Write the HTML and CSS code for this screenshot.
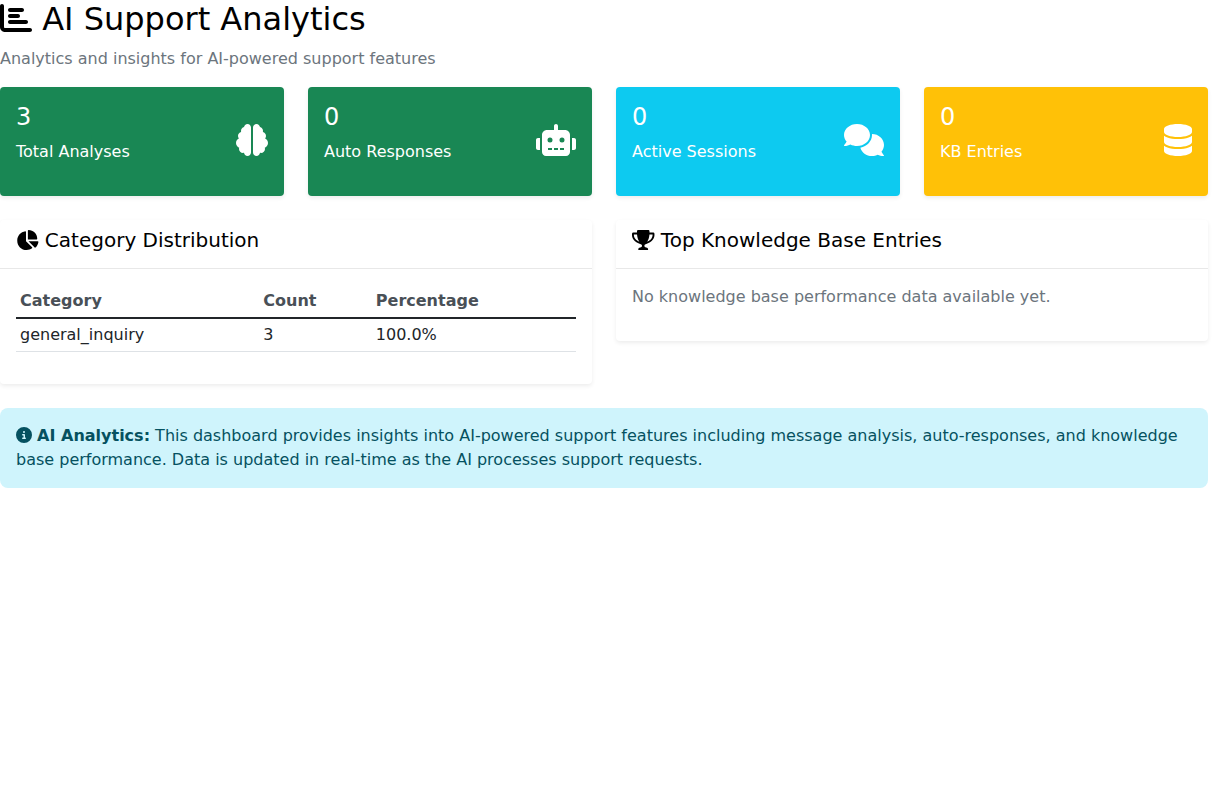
FILE: index.html
```html
<!DOCTYPE html>
<html lang="en">
<head>
<meta charset="utf-8">
<title>AI Support Analytics</title>
<link rel="stylesheet" href="styles.css">
</head>
<body>
<main class="page">
  <header class="page-header">
    <h1><svg class="icon" viewBox="0 0 512 512"><path d="M32 32c17.7 0 32 14.3 32 32V400c0 8.800 7.200 16 16 16H480c17.700 0 32 14.300 32 32s-14.300 32-32 32H80c-44.200 0-80-35.800-80-80V64C0 46.300 14.300 32 32 32zm96 96c0-17.700 14.300-32 32-32l192 0c17.700 0 32 14.300 32 32s-14.300 32-32 32l-192 0c-17.700 0-32-14.300-32-32zm32 64H288c17.700 0 32 14.300 32 32s-14.300 32-32 32H160c-17.700 0-32-14.300-32-32s14.300-32 32-32zm0 96H416c17.700 0 32 14.300 32 32s-14.300 32-32 32H160c-17.700 0-32-14.300-32-32s14.300-32 32-32z"/></svg> AI Support Analytics</h1>
    <p class="muted">Analytics and insights for AI-powered support features</p>
  </header>

  <section class="stats">
    <div class="card stat green">
      <div><h4>3</h4><p>Total Analyses</p></div>
      <svg class="icon" viewBox="0 0 512 512"><path d="M184 0c30.9 0 56 25.1 56 56V456c0 30.9-25.1 56-56 56c-28.9 0-52.7-21.9-55.7-50.1c-5.2 1.4-10.7 2.1-16.3 2.1c-35.3 0-64-28.7-64-64c0-7.4 1.3-14.6 3.6-21.2C21.4 367.4 0 338.2 0 304c0-31.9 18.7-59.5 45.8-72.3C37.1 220.8 32 207 32 192c0-30.7 21.6-56.3 50.4-62.6C80.8 123.9 80 118 80 112c0-29.9 20.6-55.1 48.3-62.1C131.3 21.9 155.1 0 184 0zM328 0c28.9 0 52.6 21.9 55.7 49.9c27.8 7 48.3 32.1 48.3 62.1c0 6-.8 11.9-2.4 17.4c28.8 6.2 50.4 31.9 50.4 62.6c0 15-5.1 28.8-13.8 39.7C493.3 244.5 512 272.1 512 304c0 34.2-21.4 63.4-51.6 74.8c2.3 6.6 3.6 13.8 3.6 21.2c0 35.3-28.7 64-64 64c-5.6 0-11.1-.7-16.3-2.1c-3 28.2-26.8 50.1-55.700 50.1c-30.9 0-56-25.1-56-56V56c0-30.9 25.1-56 56-56z"/></svg>
    </div>
    <div class="card stat green">
      <div><h4>0</h4><p>Auto Responses</p></div>
      <svg class="icon w-640" viewBox="0 0 640 512"><path fill-rule="evenodd" d="M32 224h32v192H32c-17.7 0-32-14.300-32-32V256c0-17.700 14.300-32 32-32zM608 224h-32v192h32c17.700 0 32-14.300 32-32V256c0-17.700-14.300-32-32-32zM464 96H352V32c0-17.700-14.300-32-32-32s-32 14.300-32 32v64H176c-44.200 0-80 35.800-80 80v272c0 35.300 28.700 64 64 64h320c35.300 0 64-28.700 64-64V176c0-44.200-35.800-80-80-80zM192 384h64v32h-64zM288 384h64v32h-64zM384 384h64v32h-64zM264 256a40 40 0 1 0-80 0 40 40 0 1 0 80 0zM456 256a40 40 0 1 0-80 0 40 40 0 1 0 80 0z"/></svg>
    </div>
    <div class="card stat cyan">
      <div><h4>0</h4><p>Active Sessions</p></div>
      <svg class="icon w-640" viewBox="0 0 640 512"><path d="M416 176C416 78.8 322.9 0 208 0S0 78.8 0 176c0 39.57 15.62 75.96 41.67 105.4c-16.39 32.76-39.23 57.32-39.59 57.68c-2.1 2.205-2.67 5.475-1.441 8.354C1.9 350.3 4.602 352 7.66 352c38.35 0 70.76-11.12 95.74-24.04C134.2 343.1 169.8 352 208 352C322.9 352 416 273.2 416 176zM599.6 443.7C624.8 413.9 640 376.6 640 336C640 238.8 554 160 448 160c-.3145 0-.6191 .041-.9336 .043C447.5 165.3 448 170.6 448 176c0 98.62-79.68 181.2-186.1 202.5C282.7 455.1 357.1 512 448 512c33.69 0 65.32-8.008 92.85-21.98C565.2 502 596.1 512 632.3 512c3.059 0 5.76-1.725 7.02-4.605c1.229-2.879 .6582-6.148-1.441-8.354C637.6 498.7 615.9 475.3 599.6 443.7z"/></svg>
    </div>
    <div class="card stat amber">
      <div><h4>0</h4><p>KB Entries</p></div>
      <svg class="icon w-448" viewBox="0 0 448 512"><path d="M448 80v48c0 44.2-100.3 80-224 80S0 172.2 0 128V80C0 35.8 100.3 0 224 0S448 35.8 448 80zM393.2 214.7c20.8-7.4 39.9-16.9 54.8-28.6V288c0 44.2-100.3 80-224 80S0 332.2 0 288V186.1c14.9 11.8 34 21.2 54.8 28.6C99.7 230.7 159.5 240 224 240s124.3-9.3 169.2-25.3zM0 346.1c14.9 11.8 34 21.2 54.8 28.6C99.7 390.7 159.5 400 224 400s124.3-9.3 169.2-25.3c20.8-7.4 39.9-16.9 54.8-28.6V432c0 44.2-100.3 80-224 80S0 476.2 0 432V346.1z"/></svg>
    </div>
  </section>

  <section class="panels">
    <div class="card">
      <div class="card-header"><h5><svg class="icon w-576" viewBox="0 0 576 512"><path d="M304 240V16.6c0-9 7-16.6 16-16.6C443.7 0 544 100.3 544 224c0 9-7.6 16-16.6 16H304zM32 272C32 150.7 122.1 50.3 239 34.3c9.2-1.3 17 6.1 17 15.4V288L412.5 444.5c6.7 6.7 6.2 17.7-1.5 23.1C371.8 495.6 323.8 512 272 512C139.5 512 32 404.6 32 272zm526.4 16c9.3 0 16.6 7.8 15.4 17c-7.7 55.9-34.6 105.6-73.9 142.3c-6 5.6-15.4 5.2-21.2-.7L320 288H558.4z"/></svg> Category Distribution</h5></div>
      <div class="card-body">
        <table>
          <thead><tr><th>Category</th><th>Count</th><th>Percentage</th></tr></thead>
          <tbody><tr><td>general_inquiry</td><td>3</td><td>100.0%</td></tr></tbody>
        </table>
      </div>
    </div>
    <div class="card">
      <div class="card-header"><h5><svg class="icon w-576" viewBox="0 0 576 512"><path d="M572.1 82.38C569.5 71.59 559.8 64 548.7 64h-100.8c.2422-12.45 .1078-23.7-.1559-33.02C447.3 13.63 433.2 0 415.8 0H160.2C142.8 0 128.7 13.63 128.2 30.98C127.1 40.3 127.8 51.55 128.1 64H27.26C16.16 64 6.537 71.59 3.912 82.38C3.1 85.78-15.71 167.2 37.07 245.9c37.44 55.82 100.6 95.03 187.5 117.4c18.7 4.805 31.41 22.06 31.41 41.37C256 428.5 236.5 448 212.6 448H208c-26.52 0-47.99 21.5-47.99 48c0 8.836 7.163 16 15.1 16h223.1c8.836 0 15.1-7.164 15.1-16c0-26.5-21.48-48-47.99-48h-4.644c-23.86 0-43.36-19.5-43.36-43.35c0-19.31 12.71-36.57 31.41-41.37c86.96-22.34 150.1-61.55 187.5-117.4C591.7 167.2 572.9 85.78 572.1 82.38zM77.41 219.8C49.47 178.6 47.01 135.7 48.38 112h80.39c5.359 59.62 20.35 131.1 57.67 189.1C137.4 281.6 100.9 254.4 77.41 219.8zM498.6 219.8c-23.44 34.6-59.94 61.75-109 81.22C426.9 243.1 441.9 171.6 447.2 112h80.39C528.1 135.7 526.5 178.7 498.6 219.8z"/></svg> Top Knowledge Base Entries</h5></div>
      <div class="card-body"><p class="muted">No knowledge base performance data available yet.</p></div>
    </div>
  </section>

  <div class="alert"><svg class="icon" viewBox="0 0 512 512"><path d="M256 512A256 256 0 1 0 256 0a256 256 0 1 0 0 512zM216 336h24V272H216c-13.3 0-24-10.7-24-24s10.7-24 24-24h48c13.3 0 24 10.7 24 24v88h8c13.3 0 24 10.7 24 24s-10.7 24-24 24H216c-13.3 0-24-10.7-24-24s10.7-24 24-24zm40-208a32 32 0 1 1 0 64 32 32 0 1 1 0-64z"/></svg> <strong>AI Analytics:</strong> This dashboard provides insights into AI-powered support features including message analysis, auto-responses, and knowledge base performance. Data is updated in real-time as the AI processes support requests.</div>
</main>
</body>
</html>
```
FILE: styles.css
```css
* { box-sizing: border-box; }

body {
  margin: 0;
  background: #fff;
  color: #212529;
  font: 16px/1.5 "DejaVu Sans", sans-serif;
}

.page { padding-right: 24px; }

h1, h4, h5 { margin: 0 0 8px; font-weight: 400; line-height: 1.2; }
h1 { font-size: 32px; color: #000; line-height: 39px; }
h4 { font-size: 24px; }
h5 { font-size: 20px; color: #000; }
p { margin: 0 0 16px; }

.muted { color: #6c757d; }

.icon {
  width: 1em;
  height: 1em;
  fill: currentColor;
  vertical-align: -0.125em;
}
.w-640 { width: 1.25em; }
.w-576 { width: 1.125em; }
.w-448 { width: 0.875em; }

.stats, .panels {
  display: grid;
  gap: 24px;
  align-items: start;
  margin-bottom: 24px;
}
.stats { grid-template-columns: repeat(4, 1fr); }
.panels { grid-template-columns: repeat(2, 1fr); }

.card {
  border-radius: 4px;
  background: #fff;
  box-shadow: 0 2px 4px rgba(0, 0, 0, 0.075);
}

.stat {
  display: flex;
  justify-content: space-between;
  align-items: center;
  height: 109px;
  padding: 16px;
  color: #fff;
}
.stat .icon { font-size: 32px; margin-bottom: 3px; }
.green { background: #198754; }
.cyan { background: #0dcaf0; }
.amber { background: #ffc107; }

.card-header {
  padding: 8px 16px;
  border-bottom: 1px solid rgba(0, 0, 0, 0.09);
}
.card-body { padding: 16px; }

table {
  width: 100%;
  margin-bottom: 16px;
  border-collapse: collapse;
}
th, td { padding: 4px; text-align: left; }
th { color: #495057; border-bottom: 2px solid #212529; }
td { border-bottom: 1px solid #dee2e6; }

.alert {
  padding: 16px;
  border-radius: 8px;
  background: #cff4fc;
  color: #055160;
}
```
